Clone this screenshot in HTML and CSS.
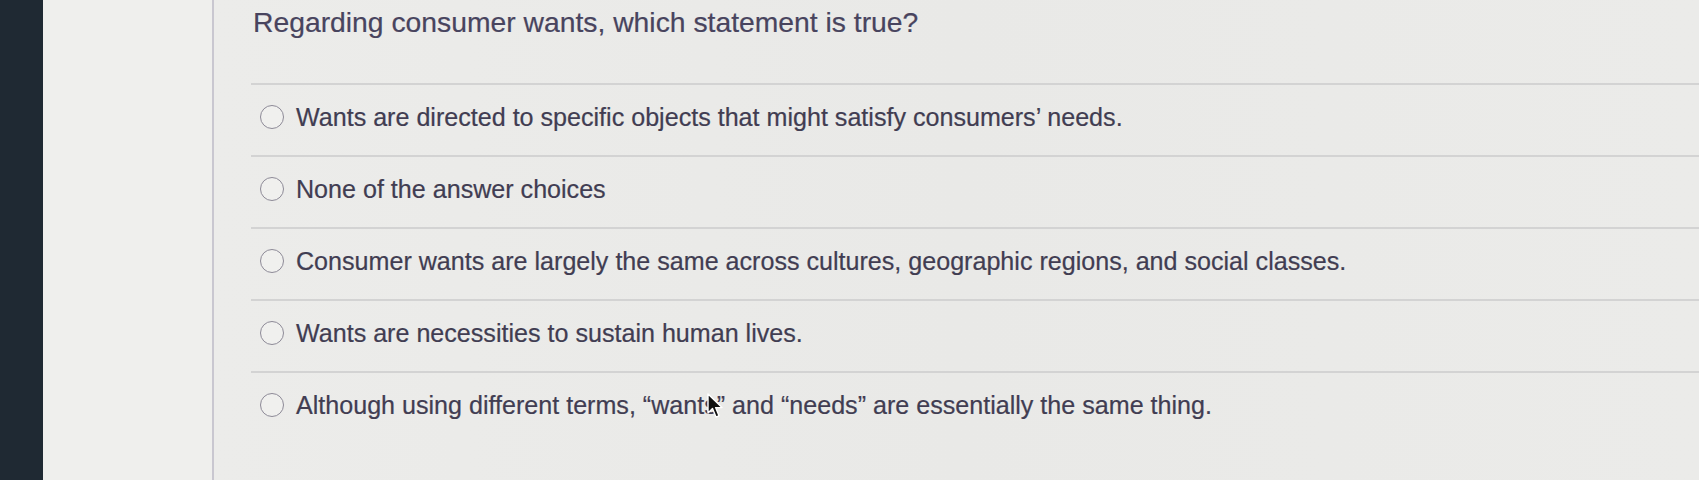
FILE: index.html
```html
<!DOCTYPE html>
<html>
<head>
<meta charset="utf-8">
<link rel="stylesheet" href="styles.css">
</head>
<body>
<div class="screen">
  <div class="edge"></div>
  <div class="side"></div>
  <main class="main">
    <h1 class="question">Regarding consumer wants, which statement is true?</h1>
    <ul class="options">
      <li class="option"><span class="radio"></span><span class="label">Wants are directed to specific objects that might satisfy consumers’ needs.</span></li>
      <li class="option"><span class="radio"></span><span class="label">None of the answer choices</span></li>
      <li class="option"><span class="radio"></span><span class="label">Consumer wants are largely the same across cultures, geographic regions, and social classes.</span></li>
      <li class="option"><span class="radio"></span><span class="label">Wants are necessities to sustain human lives.</span></li>
      <li class="option"><span class="radio"></span><span class="label">Although using different terms, “wants” and “needs” are essentially the same thing.</span>
        <svg class="cursor" width="18" height="26" viewBox="0 0 18 26"><path d="M1 1 L1 20 L5.5 15.5 L9 24 L12 22.8 L8.6 14.6 L15 14.6 Z" fill="#111" stroke="#fff" stroke-width="1.4" stroke-linejoin="round"/></svg>
      </li>
    </ul>
  </main>
</div>
</body>
</html>
```
FILE: styles.css
```css
html, body {
  margin: 0;
  padding: 0;
}
body {
  width: 1699px;
  height: 480px;
  overflow: hidden;
  background: #ebebe9;
  font-family: "Liberation Sans", Arial, sans-serif;
}
.screen {
  display: flex;
  height: 480px;
}
.edge {
  width: 43px;
  flex: none;
  background: #1f2933;
}
.side {
  width: 169px;
  flex: none;
  background: #efefed;
  border-right: 2px solid #c9c7d0;
}
.main {
  flex: 1;
  padding-left: 37px;
  background: linear-gradient(90deg, #ececea 0%, #e9e9e7 50%, #ebebe9 100%);
}
.question {
  margin: 0;
  height: 83px;
  padding-left: 2px;
  padding-top: 5px;
  box-sizing: border-box;
  font-size: 28.3px;
  font-weight: normal;
  color: #48445e;
  line-height: 34px;
  -webkit-text-stroke: 0.2px #48445e;
}
.options {
  list-style: none;
  margin: 0;
  padding: 0;
}
.option {
  position: relative;
  display: flex;
  align-items: center;
  height: 72px;
  border-top: 2px solid #d3d3d3;
  padding-left: 9px;
  padding-bottom: 6px;
  box-sizing: border-box;
}
.radio {
  width: 22px;
  height: 22px;
  border: 1.8px solid #8d8a97;
  border-radius: 50%;
  flex: none;
  margin-right: 12px;
  background: #f0f0ee;
}
.label {
  font-size: 25.1px;
  color: #413d52;
  -webkit-text-stroke: 0.2px #413d52;
}
.cursor {
  position: absolute;
  left: 456px;
  top: 20px;
}
```
